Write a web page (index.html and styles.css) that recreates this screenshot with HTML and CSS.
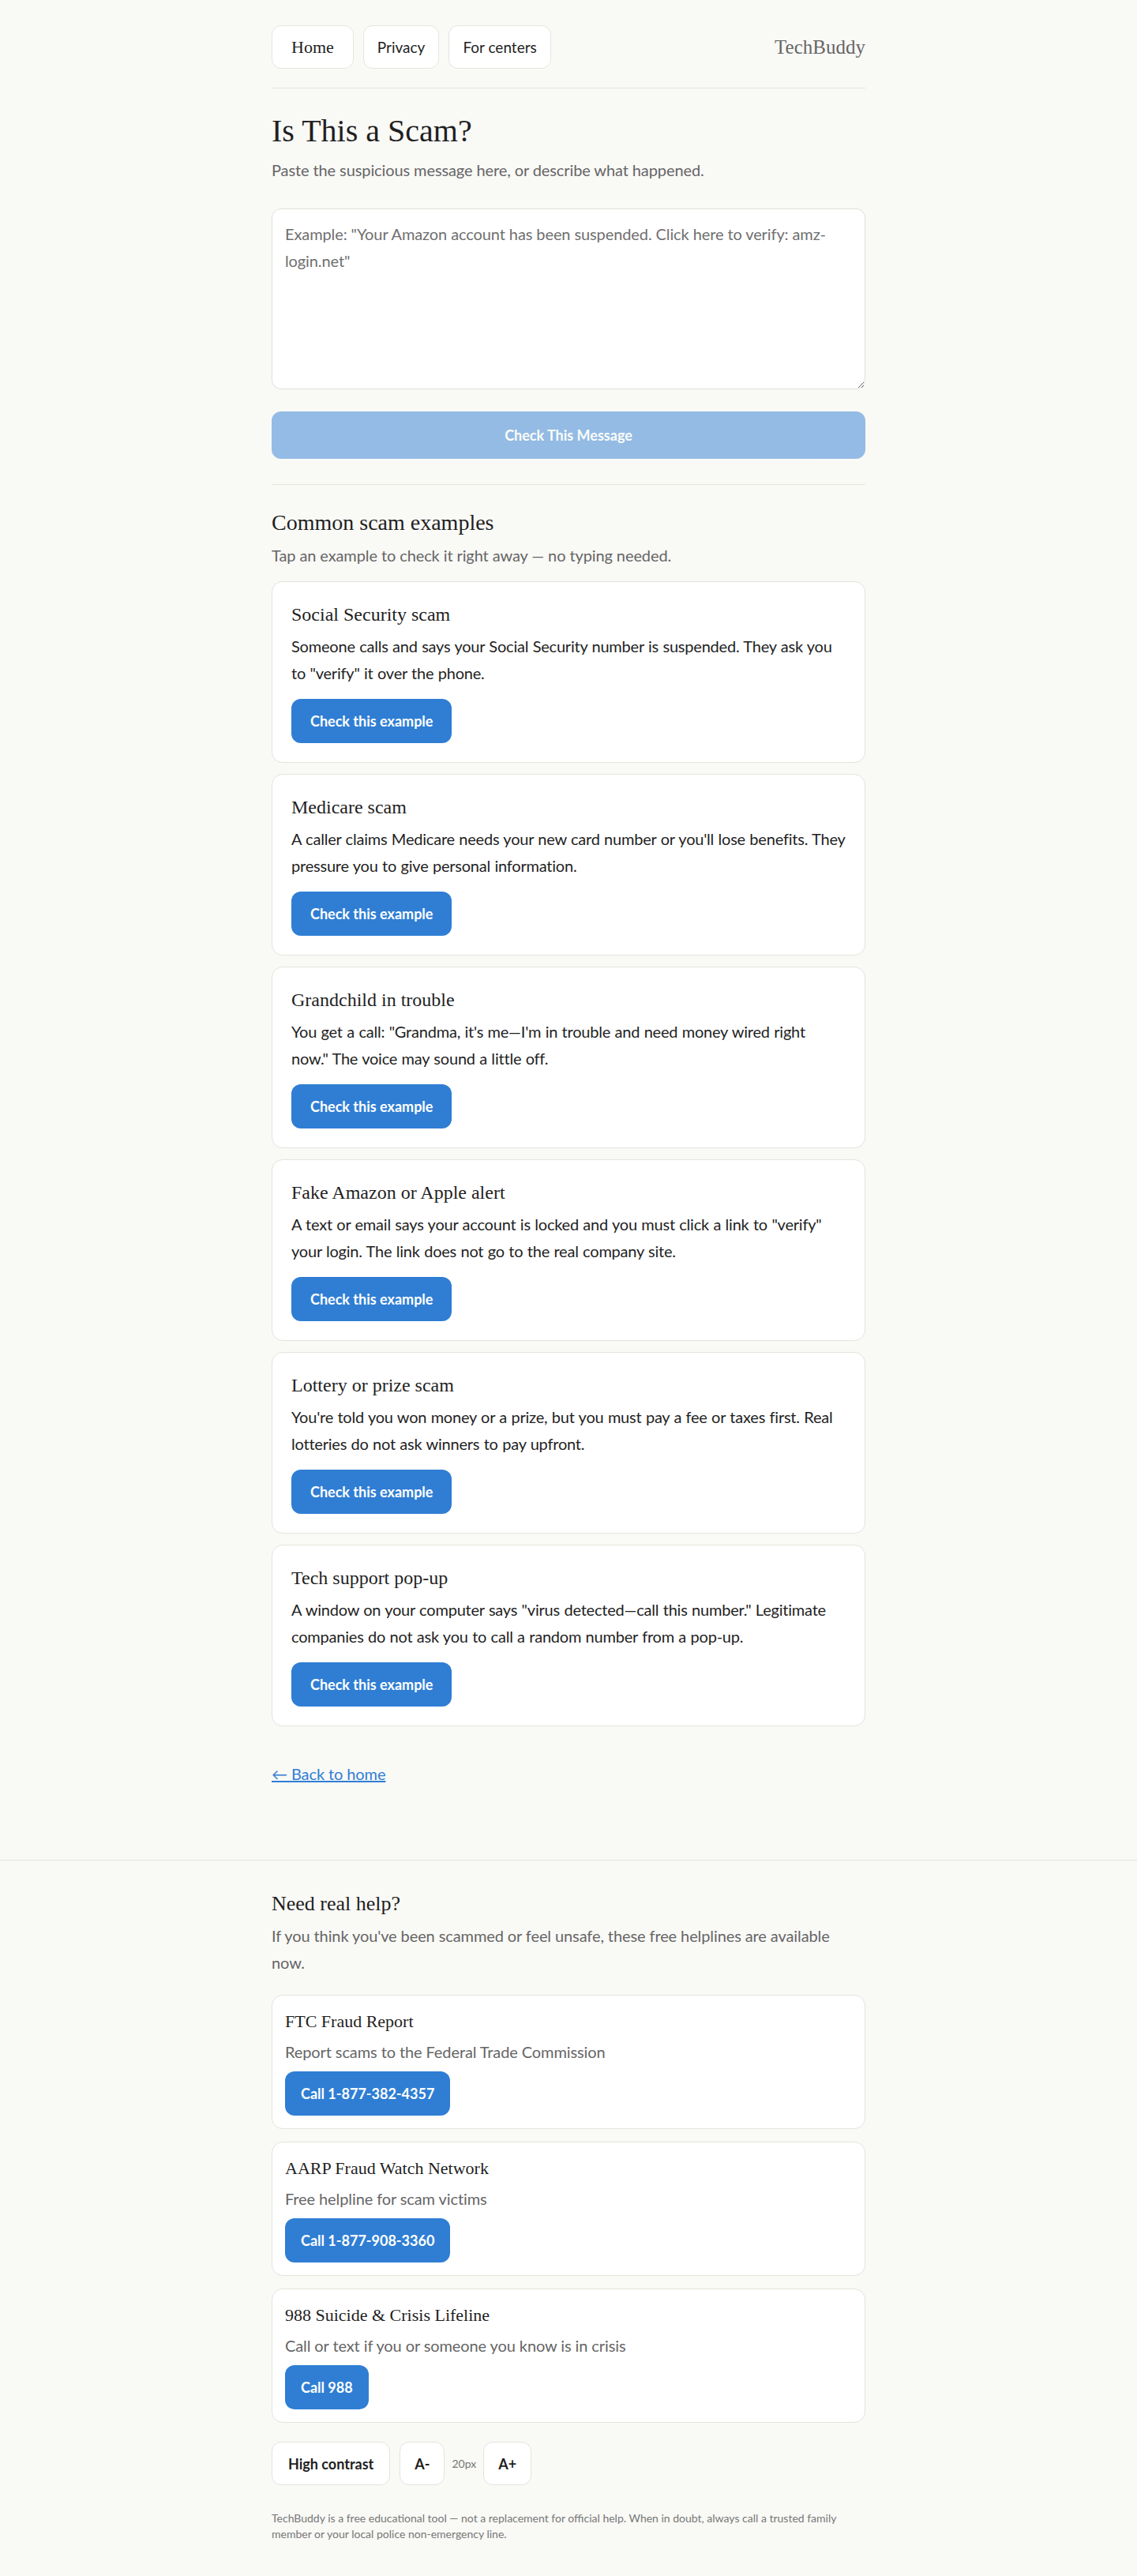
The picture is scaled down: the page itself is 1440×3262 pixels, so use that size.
FILE: index.html
```html
<!DOCTYPE html>
<html lang="en">
<head>
<meta charset="utf-8">
<title>Is This a Scam? — TechBuddy</title>
<link rel="stylesheet" href="styles.css">
</head>
<body>
<div class="wrap">
  <header class="topbar">
    <nav class="nav">
      <a class="nav-btn nav-home" href="#">Home</a>
      <a class="nav-btn" href="#">Privacy</a>
      <a class="nav-btn" href="#">For centers</a>
    </nav>
    <span class="brand">TechBuddy</span>
  </header>

  <main>
    <h1 class="title">Is This a Scam?</h1>
    <p class="lead">Paste the suspicious message here, or describe what happened.</p>

    <textarea class="msg" placeholder="Example: &quot;Your Amazon account has been suspended. Click here to verify: amz-login.net&quot;"></textarea>
    <button class="btn btn-block" disabled>Check This Message</button>

    <hr class="rule">

    <h2 class="section-title">Common scam examples</h2>
    <p class="lead">Tap an example to check it right away — no typing needed.</p>

    <div class="examples">
      <div class="card">
        <h3 class="card-title">Social Security scam</h3>
        <p class="card-text">Someone calls and says your Social Security number is suspended. They ask you to "verify" it over the phone.</p>
        <button class="btn">Check this example</button>
      </div>
      <div class="card">
        <h3 class="card-title">Medicare scam</h3>
        <p class="card-text">A caller claims Medicare needs your new card number or you'll lose benefits. They pressure you to give personal information.</p>
        <button class="btn">Check this example</button>
      </div>
      <div class="card">
        <h3 class="card-title">Grandchild in trouble</h3>
        <p class="card-text">You get a call: "Grandma, it's me—I'm in trouble and need money wired right now." The voice may sound a little off.</p>
        <button class="btn">Check this example</button>
      </div>
      <div class="card">
        <h3 class="card-title">Fake Amazon or Apple alert</h3>
        <p class="card-text">A text or email says your account is locked and you must click a link to "verify" your login. The link does not go to the real company site.</p>
        <button class="btn">Check this example</button>
      </div>
      <div class="card">
        <h3 class="card-title">Lottery or prize scam</h3>
        <p class="card-text">You're told you won money or a prize, but you must pay a fee or taxes first. Real lotteries do not ask winners to pay upfront.</p>
        <button class="btn">Check this example</button>
      </div>
      <div class="card">
        <h3 class="card-title">Tech support pop-up</h3>
        <p class="card-text">A window on your computer says "virus detected—call this number." Legitimate companies do not ask you to call a random number from a pop-up.</p>
        <button class="btn">Check this example</button>
      </div>
    </div>

    <a class="back" href="#">← Back to home</a>
  </main>
</div>

<footer class="footer">
  <div class="wrap">
    <h2 class="help-title">Need real help?</h2>
    <p class="lead">If you think you've been scammed or feel unsafe, these free helplines are available now.</p>

    <div class="helplines">
      <div class="hcard">
        <h3 class="hcard-title">FTC Fraud Report</h3>
        <p class="hcard-text">Report scams to the Federal Trade Commission</p>
        <a class="btn btn-call" href="#">Call 1-877-382-4357</a>
      </div>
      <div class="hcard">
        <h3 class="hcard-title">AARP Fraud Watch Network</h3>
        <p class="hcard-text">Free helpline for scam victims</p>
        <a class="btn btn-call" href="#">Call 1-877-908-3360</a>
      </div>
      <div class="hcard">
        <h3 class="hcard-title">988 Suicide &amp; Crisis Lifeline</h3>
        <p class="hcard-text">Call or text if you or someone you know is in crisis</p>
        <a class="btn btn-call" href="#">Call 988</a>
      </div>
    </div>

    <div class="controls">
      <button class="ctrl ctrl-wide">High contrast</button>
      <div class="size-group">
        <button class="ctrl">A-</button>
        <span class="size-val">20px</span>
        <button class="ctrl">A+</button>
      </div>
    </div>

    <p class="fineprint">TechBuddy is a free educational tool — not a replacement for official help. When in doubt, always call a trusted family member or your local police non-emergency line.</p>
  </div>
</footer>
</body>
</html>
```

FILE: styles.css
```css
* { box-sizing: border-box; }

html, body {
  margin: 0;
  padding: 0;
}

body {
  background: #f9f9f6;
  color: #1f1f1f;
  font-family: Lato, "Liberation Sans", sans-serif;
  font-size: 20px;
  line-height: 34px;
  letter-spacing: -0.1px;
}

.wrap {
  width: 752px;
  margin: 0 auto;
}

/* Header */
.topbar {
  display: flex;
  align-items: center;
  justify-content: space-between;
  padding-top: 32px;
  padding-bottom: 24px;
  border-bottom: 1px solid #e6e3dc;
}

.nav {
  display: flex;
  gap: 12px;
}

.nav-btn {
  display: flex;
  align-items: center;
  height: 55px;
  padding: 0 17px;
  background: #fff;
  border: 1px solid #e8e5de;
  border-radius: 12px;
  color: #1f1f1f;
  text-decoration: none;
  font-size: 19px;
  letter-spacing: 0;
}

.nav-home {
  font-family: "Liberation Serif", serif;
  font-size: 22px;
  padding: 0 24px;
}

.brand {
  font-family: "Liberation Serif", serif;
  font-size: 25px;
  letter-spacing: 0;
  color: #666;
}

/* Main */
.title {
  margin: 30px 0 0;
  font-family: "Liberation Serif", serif;
  font-weight: 400;
  font-size: 40px;
  line-height: 48px;
  letter-spacing: 0;
  color: #1f1f1f;
}

.lead {
  margin: 8px 0 0;
  color: #666;
}

.msg {
  display: block;
  width: 100%;
  height: 229px;
  margin-top: 32px;
  padding: 14px 16px;
  background: #fff;
  border: 1px solid #e2dfd8;
  border-radius: 12px;
  font-family: Lato, "Liberation Sans", sans-serif;
  font-size: 20px;
  line-height: 34px;
  letter-spacing: -0.1px;
  color: #1f1f1f;
  resize: vertical;
}

.msg::placeholder {
  color: #6f6f6f;
}

.btn {
  display: inline-flex;
  align-items: center;
  justify-content: center;
  height: 56px;
  padding: 0 24px;
  background: #2f7ed4;
  color: #fff;
  border: 0;
  border-radius: 12px;
  font-family: Lato, "Liberation Sans", sans-serif;
  font-size: 18px;
  font-weight: 700;
  letter-spacing: 0;
  text-decoration: none;
  cursor: pointer;
}

.btn-block {
  display: flex;
  width: 100%;
  height: 60px;
  margin-top: 28px;
}

.btn:disabled {
  opacity: 0.5;
  cursor: default;
}

.rule {
  margin: 32px 0 0;
  border: 0;
  border-top: 1px solid #e6e3dc;
}

.section-title {
  margin: 30px 0 0;
  font-family: "Liberation Serif", serif;
  font-weight: 400;
  font-size: 28px;
  line-height: 36px;
  letter-spacing: 0;
}

.section-title + .lead {
  margin-top: 6px;
}

.examples {
  display: flex;
  flex-direction: column;
  gap: 14px;
  margin-top: 16px;
}

.card {
  background: #fff;
  border: 1px solid #e6e3dc;
  border-radius: 14px;
  padding: 24px;
}

.card-title {
  margin: 0;
  font-family: "Liberation Serif", serif;
  font-weight: 400;
  font-size: 24px;
  line-height: 34px;
  letter-spacing: 0;
}

.card-text {
  margin: 6px 0 16px;
  letter-spacing: -0.21px;
  word-spacing: 0.5px;
}

.back {
  display: inline-block;
  margin-top: 43px;
  margin-bottom: 92px;
  color: #2f7ed4;
  text-decoration: underline;
}

/* Footer */
.footer {
  border-top: 1px solid #e6e3dc;
  padding: 38px 0 40px;
}

.help-title {
  margin: 0;
  font-family: "Liberation Serif", serif;
  font-weight: 400;
  font-size: 26px;
  line-height: 34px;
  letter-spacing: 0;
}

.help-title + .lead {
  margin-top: 6px;
}

.helplines {
  display: flex;
  flex-direction: column;
  gap: 16px;
  margin-top: 24px;
}

.hcard {
  background: #fff;
  border: 1px solid #e6e3dc;
  border-radius: 14px;
  padding: 16px;
}

.hcard-title {
  margin: 0;
  font-family: "Liberation Serif", serif;
  font-weight: 400;
  font-size: 22px;
  line-height: 34px;
  letter-spacing: 0;
}

.hcard-text {
  margin: 4px 0 8px;
  color: #666;
}

.btn-call {
  padding: 0 20px;
}

.controls {
  display: flex;
  align-items: center;
  gap: 12px;
  margin-top: 24px;
}

.size-group {
  display: flex;
  align-items: center;
  gap: 9px;
}

.ctrl {
  height: 55px;
  min-width: 54px;
  padding: 0 18px;
  background: #fff;
  border: 1px solid #e6e3dc;
  border-radius: 12px;
  font-family: Lato, "Liberation Sans", sans-serif;
  font-size: 18px;
  font-weight: 700;
  letter-spacing: 0;
  color: #1f1f1f;
}

.ctrl-wide {
  padding: 0 20px;
}

.size-val {
  font-size: 14px;
  letter-spacing: 0;
  color: #777;
}

.fineprint {
  margin: 32px 0 0;
  font-size: 14px;
  line-height: 20px;
  letter-spacing: 0;
  color: #777;
}
```
